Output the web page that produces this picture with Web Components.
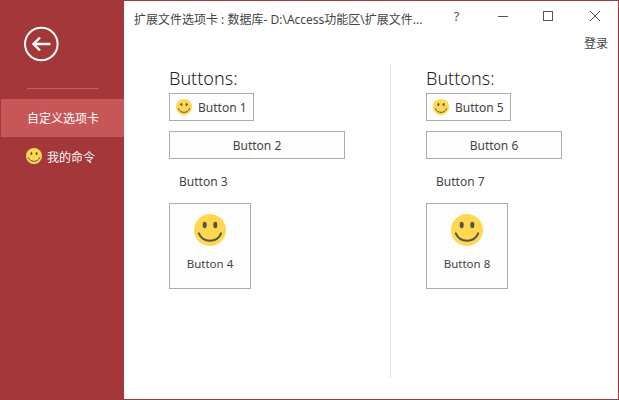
<!DOCTYPE html>
<html lang="zh">
<head>
<meta charset="utf-8">
<title>扩展文件选项卡</title>
<style>
html,body{margin:0;padding:0;background:#fff}
body{font-family:"Noto Sans","Noto Sans CJK SC",sans-serif;font-size:12px;color:#444}
</style>
</head>
<body>
<app-window>
  <side-bar slot="side">
    <side-item selected>自定义选项卡</side-item>
    <side-item icon>我的命令</side-item>
  </side-bar>
  <title-bar slot="title">扩展文件选项卡 : 数据库- D:\Access功能区\扩展文件...</title-bar>
  <button-column slot="left">
    <rb-button kind="small" style="width:85px">Button 1</rb-button>
    <rb-button kind="plain" style="width:176px">Button 2</rb-button>
    <rb-button kind="flat">Button 3</rb-button>
    <rb-button kind="large">Button 4</rb-button>
  </button-column>
  <button-column slot="right">
    <rb-button kind="small" style="width:85px">Button 5</rb-button>
    <rb-button kind="plain" style="width:136px">Button 6</rb-button>
    <rb-button kind="flat">Button 7</rb-button>
    <rb-button kind="large">Button 8</rb-button>
  </button-column>
</app-window>
<script>
const SMILE = s => `<svg width="${s}" height="${s}" viewBox="0 0 32 32" style="display:block;flex:none" aria-hidden="true">
  <circle cx="16" cy="16" r="16" fill="#ffd850"/>
  <ellipse cx="10.7" cy="11" rx="2" ry="3.200" fill="#55534e"/>
  <ellipse cx="21.3" cy="11" rx="2" ry="3.200" fill="#55534e"/>
  <path d="M4.800 19.400C7 24.600 11 26.700 16 26.700s9-2.100 11.200-7.300" fill="none" stroke="#55534e" stroke-width="2" stroke-linecap="round"/>
</svg>`;
const def = (name, html) => customElements.define(name, class extends HTMLElement {
  constructor(){ super(); this.attachShadow({mode:'open'}).innerHTML = html; }
});

def('app-window', `<style>
  :host{display:flex;box-sizing:border-box;width:619px;height:400px;border:1px solid #a4373a;border-left:0;background:#fff;overflow:hidden}
  .side{width:124px;flex:none;background:#a4373a;display:flex}
  .main{flex:1;min-width:0;display:flex;flex-direction:column}
  .content{flex:1;display:flex;padding:14px 0 21px 45px;min-height:0}
  .col-l{width:221px;flex:none}
  .col-r{flex:1;border-left:1px solid #e1e1e1;padding-left:35px}
  .signin{display:flex;justify-content:flex-end;padding-right:10px;height:14px;line-height:14px;color:#444;font-size:12px;font-family:"Noto Sans CJK SC",sans-serif;margin-top:1px}
</style>
<div class="side"><slot name="side"></slot></div>
<div class="main">
  <slot name="title"></slot>
  <div class="signin">登录</div>
  <div class="content">
    <div class="col-l"><slot name="left"></slot></div>
    <div class="col-r"><slot name="right"></slot></div>
  </div>
</div>`);

def('side-bar', `<style>
  :host{display:flex;flex-direction:column;width:124px;padding-top:25px;box-sizing:border-box}
  .back{display:block;margin-left:23px}
  .rule{height:1px;background:#bf6163;margin:26px 25px 10px 27px}
</style>
<svg class="back" width="36" height="36" viewBox="0 0 36 36" fill="none" stroke="#fff" aria-hidden="true">
  <circle cx="18.3" cy="18" r="16.300" stroke-width="2"/>
  <path d="M27.500 18H10.500M17 11.500L10.500 18L17 24.500" stroke-width="2.400"/>
</svg>
<div class="rule"></div>
<slot></slot>`);

customElements.define('side-item', class extends HTMLElement {
  constructor(){ super();
    const sel = this.hasAttribute('selected'), ic = this.hasAttribute('icon');
    this.attachShadow({mode:'open'}).innerHTML = `<style>
      :host{display:flex;align-items:center;height:38px;margin-left:1px;color:#fff;font-size:12px;font-family:"Noto Sans CJK SC",sans-serif;box-sizing:border-box;background:${sel?'#c75659':'transparent'};padding-left:${ic?25:26}px;gap:5px}
      .l{padding-bottom:${sel?2:0}px}
    </style>${ic?SMILE(16):''}<span class="l"><slot></slot></span>`;
  }
});

def('title-bar', `<style>
  :host{display:flex;align-items:center;height:34px;box-sizing:border-box;padding-left:10px;font-family:"Noto Sans","Noto Sans CJK SC",sans-serif;font-size:12px;color:#444;white-space:nowrap}
  .t{flex:1;min-width:0;padding-top:2px}
  .c{width:46px;height:30px;display:flex;align-items:center;justify-content:center;flex:none;margin-top:-4px}
  .h{font-size:13px;color:#555}
</style>
<div class="t"><slot></slot></div>
<div class="c h" style="margin-right:1px;padding-left:1px;box-sizing:border-box">?</div>
<div class="c"><svg width="12" height="12" viewBox="0 0 12 12" aria-hidden="true"><path d="M1 6.500H11" stroke="#555" fill="none"/></svg></div>
<div class="c" style="margin-right:1px;margin-left:-1px"><svg width="12" height="12" viewBox="0 0 12 12" aria-hidden="true"><rect x="1.500" y="1.500" width="9" height="9" stroke="#555" fill="none"/></svg></div>
<div class="c"><svg width="12" height="12" viewBox="0 0 12 12" aria-hidden="true"><path d="M1 1L11 11M11 1L1 11" stroke="#555" fill="none"/></svg></div>`);

def('button-column', `<style>
  :host{display:flex;flex-direction:column;align-items:flex-start;padding-top:2px}
  h2{margin:0 0 3px;font:300 18px/24px "Noto Sans",sans-serif;color:#222;height:24px}
  .g{display:flex;flex-direction:column;align-items:flex-start;gap:10px}
</style>
<h2>Buttons:</h2><div class="g"><slot></slot></div>`);

customElements.define('rb-button', class extends HTMLElement {
  constructor(){ super();
    const k = this.getAttribute('kind');
    const base = `:host{display:flex;box-sizing:border-box;font:12px/16px "Noto Sans",sans-serif;color:#444;background:#fdfdfd;border:1px solid #ababab} .l{display:block;padding-top:2px}`;
    const css = {
      small:`:host{height:28px;align-items:center;padding-left:6px;gap:6px}`,
      plain:`:host{height:28px;align-items:center;justify-content:center}`,
      flat:`:host{height:24px;align-items:center;padding-left:9px;border-color:transparent;background:transparent}`,
      large:`:host{width:82px;height:86px;flex-direction:column;align-items:center;padding-top:10px;gap:8px;font-size:11.5px}`
    }[k];
    const ic = k==='small'?SMILE(16):k==='large'?SMILE(32):'';
    this.attachShadow({mode:'open'}).innerHTML = `<style>${base}${css}</style>${ic}<span class="l"><slot></slot></span>`;
  }
});
</script>
</body>
</html>
